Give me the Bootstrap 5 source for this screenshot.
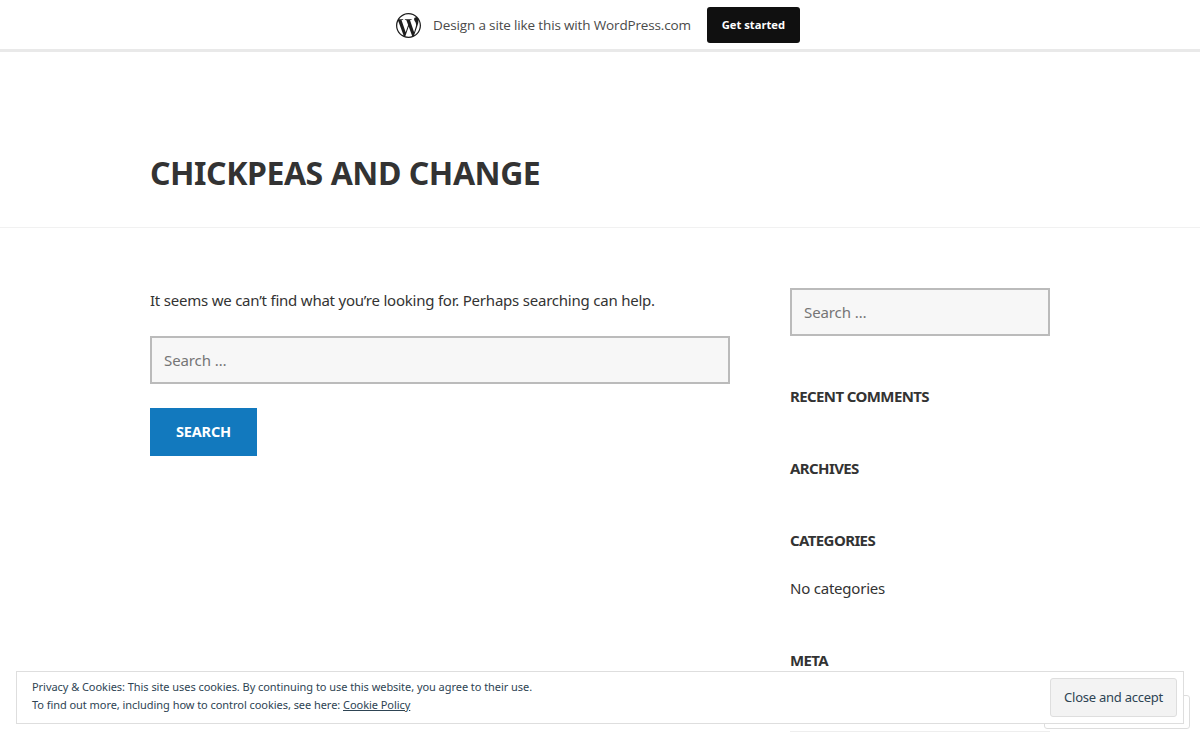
<!DOCTYPE html>
<html lang="en">
<head>
<meta charset="utf-8">
<title>Chickpeas and Change</title>
<link href="https://cdn.jsdelivr.net/npm/bootstrap@5.3.0/dist/css/bootstrap.min.css" rel="stylesheet">
<style>
html, body { height: 740px; overflow: hidden; }
body { font-family: "Noto Sans", "Open Sans", sans-serif; color: #333; font-size: 15px; letter-spacing: -.22px; }
.wp-bar { height: 52px; border-bottom: 3px solid #e9e9e9; padding: 1px 4px 0 0; }
.wp-logo { width: 25px; height: 25px; fill: #1d1d1d; }
.wp-text { font-family: "Open Sans", sans-serif; font-size: 13.5px; letter-spacing: -.15px; color: #4a4a4a; }
.wp-cta { background: #101010; color: #fff; font-family: "Open Sans", sans-serif; font-weight: 700; font-size: 11.2px; letter-spacing: 0; height: 36px; width: 93px; padding: 0; border-radius: 3px; border: 0; }
.site-top { height: 176px; border-bottom: 1px solid #f1f1f1; }
.site-inner { width: 900px; }
.site-name { font-family: "Noto Sans", sans-serif; font-weight: 700; font-size: 32px; letter-spacing: -.45px; color: #333; line-height: 44px; margin: 0; padding-top: 99px; }
.page-cols { padding-top: 60px; gap: 60px; }
.col-main { width: 580px; }
.col-side { width: 260px; }
.lead-text { line-height: 24px; margin: 0 0 24px; }
.search-box { height: 48px; background: #f7f7f7; border: 2px solid #bbb; border-radius: 0; padding: 0 12px; font-size: 15px; letter-spacing: -.1px; color: #666; }
.search-box::placeholder { color: #757575; opacity: 1; }
.search-btn { background: #1279be; color: #fff; border: 0; border-radius: 0; width: 107px; height: 48px; margin-top: 24px; font-weight: 700; font-size: 14.5px; letter-spacing: -.2px; padding: 0; }
.wid-title { font-size: 15px; font-weight: 700; line-height: 24px; margin: 0 0 24px; color: #333; letter-spacing: -.6px; }
.wid-block { margin-top: 48px; }
.wid-block p { line-height: 24px; margin: 0; }
.wid-first { margin-top: 48px; }
.meta-row { height: 36px; border-bottom: 1px solid #eee; }
.follow-box { position: fixed; left: 1044px; top: 695px; width: 146px; height: 34px; border: 1px solid #ddd; border-radius: 3px; background: #fff; }
.cookie-box { position: fixed; left: 16px; top: 671px; width: 1168px; height: 53px; border: 1px solid #dedede; background: #fff; padding: 6px 6px 6px 15px; font-size: 11px; line-height: 18px; color: #2e4453; letter-spacing: -.05px; }
.cookie-box a { color: #2e4453; }
.cookie-btn { background: #f3f3f3; border: 1px solid #dedede; border-radius: 3px; color: #2e4453; font-size: 13px; height: 39px; width: 127px; padding: 0; letter-spacing: -.25px; }
</style>
</head>
<body class="bg-white">
<div class="wp-bar d-flex align-items-center justify-content-center">
  <svg class="wp-logo" viewBox="0 0 24 24" aria-hidden="true"><path d="M21.469 6.825c.84 1.537 1.318 3.3 1.318 5.175 0 3.979-2.156 7.456-5.363 9.325l3.295-9.527c.615-1.54.82-2.771.82-3.864 0-.405-.026-.78-.07-1.11m-7.981.105c.647-.03 1.232-.105 1.232-.105.582-.075.514-.93-.067-.899 0 0-1.755.135-2.88.135-1.064 0-2.85-.15-2.85-.15-.585-.03-.661.855-.075.885 0 0 .54.061 1.125.09l1.68 4.605-2.37 7.08L5.354 6.9c.649-.03 1.234-.1 1.234-.1.585-.075.516-.93-.065-.896 0 0-1.746.138-2.874.138-.2 0-.438-.008-.69-.015C4.911 3.15 8.235 1.215 12 1.215c2.809 0 5.365 1.072 7.286 2.833-.046-.003-.091-.009-.141-.009-1.06 0-1.812.923-1.812 1.914 0 .89.513 1.643 1.06 2.531.411.72.89 1.643.89 2.977 0 .915-.354 1.994-.821 3.479l-1.075 3.585-3.9-11.61.001.014zM12 22.784c-1.059 0-2.081-.153-3.048-.437l3.237-9.406 3.315 9.087c.024.053.05.101.078.149-1.12.393-2.325.609-3.582.609M1.211 12c0-1.564.336-3.05.935-4.39L7.29 21.709C3.694 19.96 1.212 16.271 1.211 12M12 0C5.385 0 0 5.385 0 12s5.385 12 12 12 12-5.385 12-12S18.615 0 12 0"/></svg>
  <span class="wp-text ms-2 ps-1">Design a site like this with WordPress.com</span>
  <button type="button" class="btn wp-cta ms-3">Get started</button>
</div>
<header class="site-top">
  <div class="site-inner mx-auto"><h1 class="site-name">CHICKPEAS AND CHANGE</h1></div>
</header>
<div class="site-inner mx-auto d-flex page-cols">
  <main class="col-main">
    <p class="lead-text">It seems we can’t find what you’re looking for. Perhaps searching can help.</p>
    <input class="form-control search-box" type="search" placeholder="Search …">
    <button type="button" class="btn search-btn">SEARCH</button>
  </main>
  <aside class="col-side">
    <input class="form-control search-box" type="search" placeholder="Search …">
    <section class="wid-first"><h2 class="wid-title">RECENT COMMENTS</h2></section>
    <section class="wid-block"><h2 class="wid-title">ARCHIVES</h2></section>
    <section class="wid-block"><h2 class="wid-title">CATEGORIES</h2><p>No categories</p></section>
    <section class="wid-block"><h2 class="wid-title">META</h2><div class="meta-row"></div></section>
  </aside>
</div>
<div class="follow-box"></div>
<div class="cookie-box d-flex justify-content-between align-items-start">
  <div>Privacy &amp; Cookies: This site uses cookies. By continuing to use this website, you agree to their use.<br>To find out more, including how to control cookies, see here: <a href="#">Cookie Policy</a></div>
  <button type="button" class="btn cookie-btn">Close and accept</button>
</div>
<script src="https://cdn.jsdelivr.net/npm/bootstrap@5.3.0/dist/js/bootstrap.bundle.min.js"></script>
</body>
</html>
